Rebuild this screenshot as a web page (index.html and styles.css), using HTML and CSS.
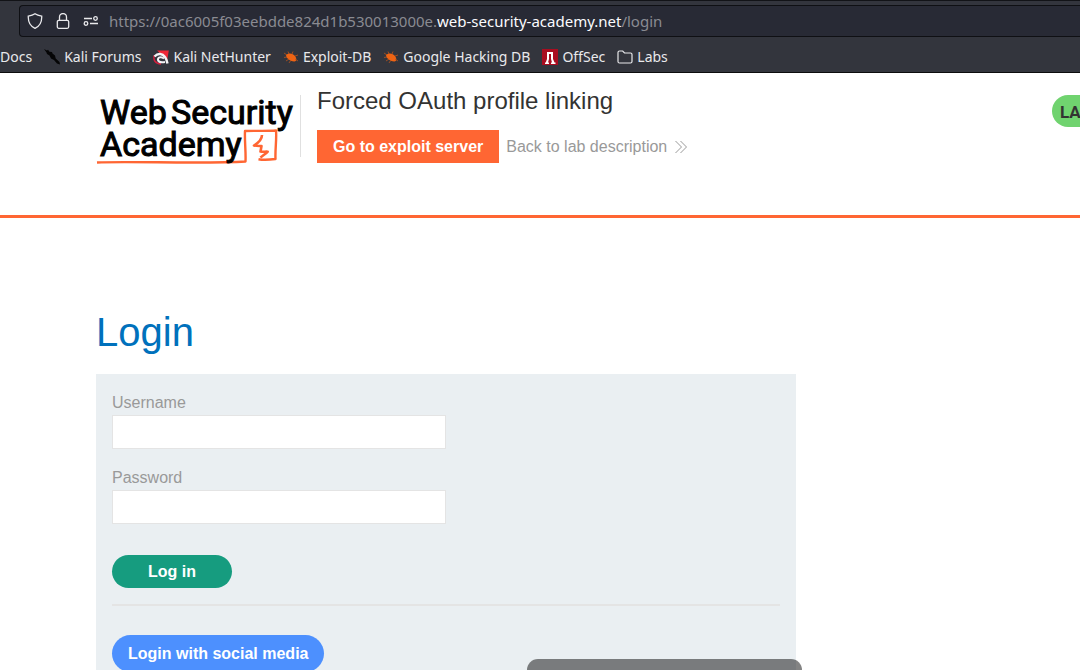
FILE: index.html
```html
<!DOCTYPE html>
<html lang="en">
<head>
<meta charset="utf-8">
<title>Forced OAuth profile linking</title>
<link rel="stylesheet" href="styles.css">
</head>
<body>
<div class="chrome">
  <div class="urlbar">
    <svg class="tool" viewBox="0 0 16 16"><path d="M8 .8c2 1.500 4.300 2 6.700 2.300C15 8.500 13 13 8 15.300 3 13 1 8.500 1.300 3.100 3.700 2.800 6 2.300 8 .8z"/></svg>
    <svg class="tool" viewBox="0 0 16 16"><rect x="2.300" y="7.300" width="11.400" height="8" rx="1.500"/><path d="M4.500 7V4a3.500 3.500 0 0 1 7 0v3"/></svg>
    <svg class="tool" viewBox="0 0 16 16"><path d="M1 5.500h8M7 10.500h8"/><circle cx="12.500" cy="5.500" r="1.800"/><circle cx="3" cy="10.500" r="1.800"/></svg>
    <div class="address">https://0ac6005f03eebdde824d1b530013000e.<span class="domain">web-security-academy.net</span>/login</div>
  </div>
  <nav class="bookmarks">
    <a href="#">Docs</a>
    <a href="#"><svg class="favicon" viewBox="0 0 16 16"><path fill="#050506" d="M0 0l3 1.500 1-.8 1.500 2 2.500.3.500 1.500 2.500 2 .7 3 3.800 3.500.5 2.500-3-1-3-3.500-3-1.500-1.500-3L3 5 2.500 3.500z"/></svg>Kali Forums</a>
    <a href="#"><svg class="favicon" viewBox="0 0 16 16"><path fill="#ef2636" d="M4 1.500h11.800L14 12 9 6z"/><path fill="none" stroke="#d41f3e" stroke-width="1.500" d="M1 6.500C.3 11 2 14.500 8 15"/><path fill="none" stroke="#f4f2f5" stroke-width="2.400" d="M1.500 7.500C5 3.800 9.500 4.500 12 8c1.500 2 2 4 2.500 6.500"/><path fill="none" stroke="#f4f2f5" stroke-width="2" d="M11 9.500C8 7 4.500 8.500 5 11c.5 2.500 4 2.500 7 2"/></svg>Kali NetHunter</a>
    <a href="#"><svg class="favicon" viewBox="0 0 16 16"><path fill="#ef6414" d="M3 6c2-2.500 7-2 9 1 2 2.500 1.500 5.500-.5 5.500C8 12.800 3 9.500 3 6z"/><path fill="none" stroke="#b9541c" stroke-width=".8" d="M4 6L1 4M4 8L1 8.500M6 10l-3 2M6 5L5 2.500M9 5l1-2.500M12 7l3-1M8 11l-2 3M12 10l3 2"/></svg>Exploit-DB</a>
    <a href="#"><svg class="favicon" viewBox="0 0 16 16"><path fill="#ef6414" d="M3 6c2-2.500 7-2 9 1 2 2.500 1.500 5.500-.5 5.500C8 12.800 3 9.500 3 6z"/><path fill="none" stroke="#b9541c" stroke-width=".8" d="M4 6L1 4M4 8L1 8.500M6 10l-3 2M6 5L5 2.500M9 5l1-2.500M12 7l3-1M8 11l-2 3M12 10l3 2"/></svg>Google Hacking DB</a>
    <a href="#"><svg class="favicon" viewBox="0 0 16 16"><path fill="#a90d20" d="M0 0h16v16H0z"/><path fill="#fff" d="M5 3h6v7l1.500 3.500h1V15H9v-1.500h1L9 10V5H7v5l-1 3.500h1V15H3v-1.500h.8L5 10z"/></svg>OffSec</a>
    <a href="#"><svg class="favicon outline" viewBox="0 0 16 16"><path d="M1 3.500q0-1.500 1.500-1.500h3.200l1.800 2h6q1.500 0 1.500 1.500v7q0 1.500-1.500 1.500h-11Q1 14 1 12.500z"/></svg>Labs</a>
  </nav>
</div>
<header class="lab-header">
  <a class="logo" href="#">
    <svg viewBox="0 0 204 76" role="img" aria-label="Web Security Academy">
      <path class="sketch" d="M1 71.500C30 70 110 73 149.500 70.500c.5-10-1-20-.5-30.500 9-.5 20 .3 31-.5.800 9-1 19-.5 28.500-6 .8-13 1-17 .2"/>
      <path class="sketch bolt" d="M166 44c0 5-4 8-8 10.500 3 .7 5 .5 7.500.5l-1 5.500c2.500.5 5 0 7.200.2-2 2.500-5 3.500-7.200 6"/>
      <g class="logo-text"><text x="4" y="33">Web</text><text x="75" y="33">Security</text><text x="4" y="65">Academy</text></g>
    </svg>
  </a>
  <div class="lab-title">
    <h2>Forced OAuth profile linking</h2>
    <div class="lab-links">
      <a class="exploit" href="#">Go to exploit server</a>
      <a class="back" href="#">Back to lab description <svg viewBox="0 0 12 14"><path d="M.5 1l6 6-6 6M5.500 1l6 6-6 6"/></svg></a>
    </div>
  </div>
  <span class="status">LA</span>
</header>
<main class="content">
  <h1>Login</h1>
  <section class="panel">
    <form class="login-form">
      <label for="username">Username</label>
      <input id="username" type="text">
      <label for="password">Password</label>
      <input id="password" type="password">
      <button class="submit" type="button">Log in</button>
    </form>
    <hr>
    <a class="social" href="#">Login with social media</a>
  </section>
</main>
<div class="toast"></div>
</body>
</html>
```
FILE: styles.css
```css
* { box-sizing: border-box; }
body {
  margin: 0;
  height: 100vh;
  overflow: hidden;
  display: flex;
  flex-direction: column;
  background: #fff;
  font: 16px/18px "Liberation Sans", Arial, sans-serif;
  color: #333332;
}
a { text-decoration: none; color: inherit; }
h1, h2 { margin: 0; font-weight: 400; }

.chrome {
  flex: none;
  padding-top: 4px;
  background: #33353d;
  border-top: 1px solid #121317;
  border-bottom: 1px solid #0c0c0d;
  font: 15px/20px "Noto Sans", sans-serif;
  color: #e9e9ec;
}
.urlbar {
  display: flex;
  align-items: center;
  gap: 12px;
  height: 32px;
  margin-left: 19px;
  padding-left: 7px;
  background: #282a35;
  border: 1px solid #0f1014;
  border-right: 0;
  border-radius: 4px 0 0 4px;
}
.tool {
  flex: none;
  width: 16px;
  height: 16px;
  fill: none;
  stroke: #e9e9ec;
  stroke-width: 1.3;
}
.address { margin-left: -2px; white-space: nowrap; color: #8a8b92; }
.domain { color: #fbfbfe; }
.bookmarks {
  display: flex;
  align-items: center;
  gap: 12px;
  height: 35px;
  padding-top: 4px;
  font-size: 14px;
  white-space: nowrap;
}
.bookmarks a { display: flex; align-items: center; gap: 4px; }
.favicon { width: 16px; height: 16px; }
.outline { fill: none; stroke: #e9e9ec; stroke-width: 1.2; }

.lab-header {
  flex: none;
  display: flex;
  align-items: flex-start;
  height: 145px;
  padding: 14px 0 0 96px;
  border-bottom: 3px solid #ff6633;
}
.logo {
  width: 205px;
  height: 62px;
  margin-top: 8px;
  border-right: 1px solid #e0e0e0;
}
.logo svg { display: block; width: 204px; height: 76px; margin-top: -4px; }
.logo-text {
  font: 400 34px Roboto, sans-serif;
  fill: #000;
  stroke: #000;
  stroke-width: 1;
}
.sketch { fill: none; stroke: #ff6633; stroke-width: 2.4; stroke-linejoin: round; }
.bolt { stroke-width: 2.6; }
.lab-title { margin-left: 16px; }
.lab-title h2 { font-size: 24px; line-height: 28px; }
.lab-links { display: flex; align-items: center; gap: 7px; margin-top: 15px; }
.exploit {
  padding: 8px 16px 7px;
  background: #ff6633;
  color: #fff;
  font-weight: 700;
}
.back { display: flex; align-items: center; gap: 8px; color: #999; }
.back svg { width: 12px; height: 14px; fill: none; stroke: #999; stroke-width: 1; }
.status {
  margin: 8px 0 0 auto;
  padding-left: 8px;
  width: 28px;
  height: 32px;
  background: #70d36f;
  border-radius: 16px 0 0 16px;
  font: 700 17px/34px Roboto, sans-serif;
}

.content { padding: 90px 96px 0; }
.content h1 { font-size: 40px; line-height: 48px; color: #0071bc; }
.panel {
  max-width: 700px;
  margin-top: 18px;
  padding: 20px 16px 32px;
  background: #eaeff2;
}
.login-form { display: flex; flex-direction: column; align-items: flex-start; color: #999; }
.login-form input {
  width: 50%;
  height: 34px;
  margin: 3px 0 20px;
  padding: 0 8px;
  border: 1px solid #e4e4e4;
  background: #fff;
  font: inherit;
}
.submit {
  width: 120px;
  height: 33px;
  margin-top: 11px;
  border: 0;
  border-radius: 17px;
  background: #169c7f;
  color: #fff;
  font: inherit;
  font-weight: 700;
}
hr { margin: 16px 0 29px; border: 0; border-top: 2px solid #e4e4e4; }
.social {
  display: inline-block;
  padding: 10px 16px 9px;
  border-radius: 19px;
  background: #4d90fe;
  color: #fff;
  font-weight: 700;
}
.toast {
  position: fixed;
  left: 527px;
  bottom: 0;
  width: 275px;
  height: 11px;
  background: rgba(8, 8, 8, .5);
  border-radius: 14px 14px 0 0;
}
```
